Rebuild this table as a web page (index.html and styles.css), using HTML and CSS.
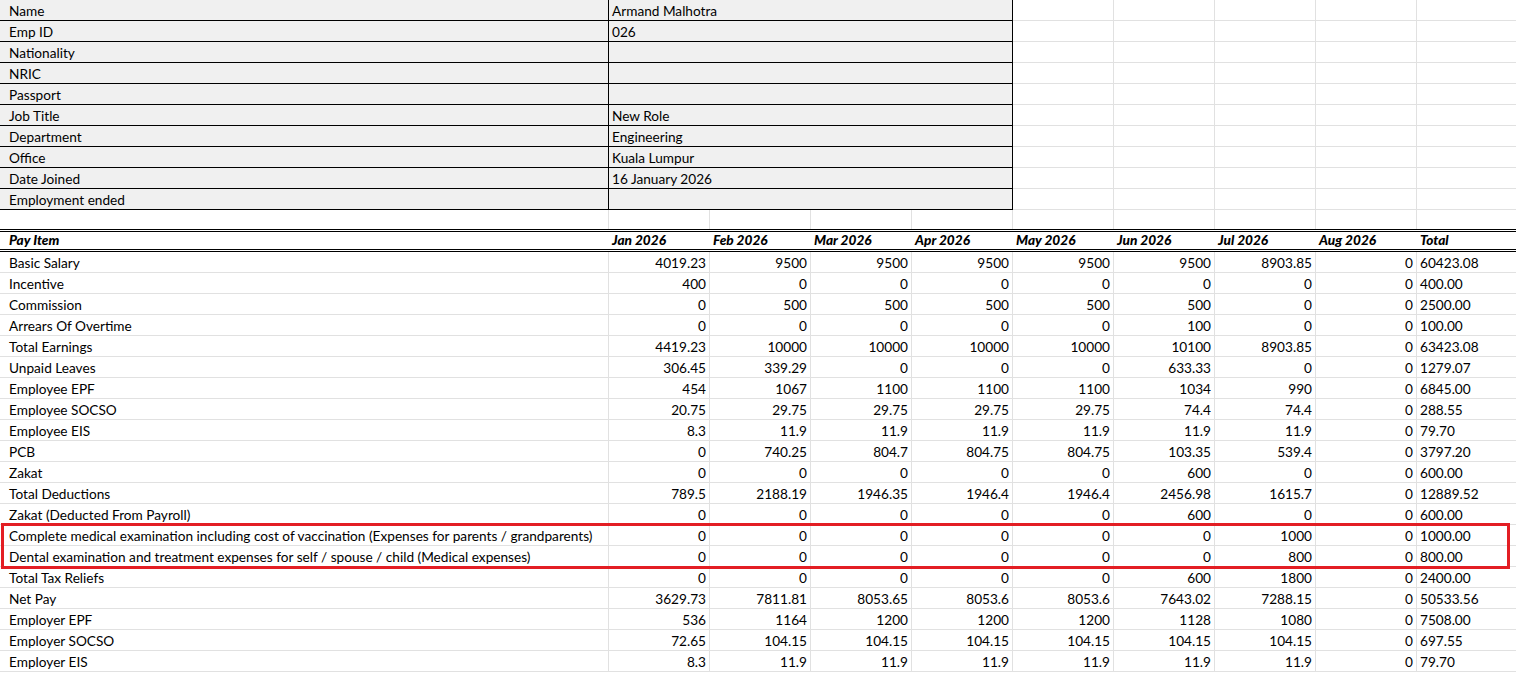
FILE: index.html
```html
<!DOCTYPE html>
<html>
<head>
<meta charset="utf-8">
<link rel="stylesheet" href="styles.css">
</head>
<body>
<div class="sheet">
  <div class="info">
    <div class="row"><div class="c lbl">Name</div><div class="c val">Armand Malhotra</div><div class="c e"></div><div class="c e"></div><div class="c e"></div><div class="c e"></div><div class="c e last"></div></div>
    <div class="row"><div class="c lbl">Emp ID</div><div class="c val">026</div><div class="c e"></div><div class="c e"></div><div class="c e"></div><div class="c e"></div><div class="c e last"></div></div>
    <div class="row"><div class="c lbl">Nationality</div><div class="c val"></div><div class="c e"></div><div class="c e"></div><div class="c e"></div><div class="c e"></div><div class="c e last"></div></div>
    <div class="row"><div class="c lbl">NRIC</div><div class="c val"></div><div class="c e"></div><div class="c e"></div><div class="c e"></div><div class="c e"></div><div class="c e last"></div></div>
    <div class="row"><div class="c lbl">Passport</div><div class="c val"></div><div class="c e"></div><div class="c e"></div><div class="c e"></div><div class="c e"></div><div class="c e last"></div></div>
    <div class="row"><div class="c lbl">Job Title</div><div class="c val">New Role</div><div class="c e"></div><div class="c e"></div><div class="c e"></div><div class="c e"></div><div class="c e last"></div></div>
    <div class="row"><div class="c lbl">Department</div><div class="c val">Engineering</div><div class="c e"></div><div class="c e"></div><div class="c e"></div><div class="c e"></div><div class="c e last"></div></div>
    <div class="row"><div class="c lbl">Office</div><div class="c val">Kuala Lumpur</div><div class="c e"></div><div class="c e"></div><div class="c e"></div><div class="c e"></div><div class="c e last"></div></div>
    <div class="row"><div class="c lbl">Date Joined</div><div class="c val">16 January 2026</div><div class="c e"></div><div class="c e"></div><div class="c e"></div><div class="c e"></div><div class="c e last"></div></div>
    <div class="row"><div class="c lbl">Employment ended</div><div class="c val"></div><div class="c e"></div><div class="c e"></div><div class="c e"></div><div class="c e"></div><div class="c e last"></div></div>
  </div>

  <div class="row spacer"><div class="c item"></div><div class="c m"></div><div class="c m"></div><div class="c m"></div><div class="c m"></div><div class="c m"></div><div class="c m"></div><div class="c m"></div><div class="c m"></div><div class="c tot"></div></div>

  <div class="row head"><div class="c item">Pay Item</div><div class="c m">Jan 2026</div><div class="c m">Feb 2026</div><div class="c m">Mar 2026</div><div class="c m">Apr 2026</div><div class="c m">May 2026</div><div class="c m">Jun 2026</div><div class="c m">Jul 2026</div><div class="c m">Aug 2026</div><div class="c tot">Total</div></div>

  <div class="data">
    <div class="row"><div class="c item">Basic Salary</div><div class="c m">4019.23</div><div class="c m">9500</div><div class="c m">9500</div><div class="c m">9500</div><div class="c m">9500</div><div class="c m">9500</div><div class="c m">8903.85</div><div class="c m">0</div><div class="c tot">60423.08</div></div>
    <div class="row"><div class="c item">Incentive</div><div class="c m">400</div><div class="c m">0</div><div class="c m">0</div><div class="c m">0</div><div class="c m">0</div><div class="c m">0</div><div class="c m">0</div><div class="c m">0</div><div class="c tot">400.00</div></div>
    <div class="row"><div class="c item">Commission</div><div class="c m">0</div><div class="c m">500</div><div class="c m">500</div><div class="c m">500</div><div class="c m">500</div><div class="c m">500</div><div class="c m">0</div><div class="c m">0</div><div class="c tot">2500.00</div></div>
    <div class="row"><div class="c item">Arrears Of Overtime</div><div class="c m">0</div><div class="c m">0</div><div class="c m">0</div><div class="c m">0</div><div class="c m">0</div><div class="c m">100</div><div class="c m">0</div><div class="c m">0</div><div class="c tot">100.00</div></div>
    <div class="row"><div class="c item">Total Earnings</div><div class="c m">4419.23</div><div class="c m">10000</div><div class="c m">10000</div><div class="c m">10000</div><div class="c m">10000</div><div class="c m">10100</div><div class="c m">8903.85</div><div class="c m">0</div><div class="c tot">63423.08</div></div>
    <div class="row"><div class="c item">Unpaid Leaves</div><div class="c m">306.45</div><div class="c m">339.29</div><div class="c m">0</div><div class="c m">0</div><div class="c m">0</div><div class="c m">633.33</div><div class="c m">0</div><div class="c m">0</div><div class="c tot">1279.07</div></div>
    <div class="row"><div class="c item">Employee EPF</div><div class="c m">454</div><div class="c m">1067</div><div class="c m">1100</div><div class="c m">1100</div><div class="c m">1100</div><div class="c m">1034</div><div class="c m">990</div><div class="c m">0</div><div class="c tot">6845.00</div></div>
    <div class="row"><div class="c item">Employee SOCSO</div><div class="c m">20.75</div><div class="c m">29.75</div><div class="c m">29.75</div><div class="c m">29.75</div><div class="c m">29.75</div><div class="c m">74.4</div><div class="c m">74.4</div><div class="c m">0</div><div class="c tot">288.55</div></div>
    <div class="row"><div class="c item">Employee EIS</div><div class="c m">8.3</div><div class="c m">11.9</div><div class="c m">11.9</div><div class="c m">11.9</div><div class="c m">11.9</div><div class="c m">11.9</div><div class="c m">11.9</div><div class="c m">0</div><div class="c tot">79.70</div></div>
    <div class="row"><div class="c item">PCB</div><div class="c m">0</div><div class="c m">740.25</div><div class="c m">804.7</div><div class="c m">804.75</div><div class="c m">804.75</div><div class="c m">103.35</div><div class="c m">539.4</div><div class="c m">0</div><div class="c tot">3797.20</div></div>
    <div class="row"><div class="c item">Zakat</div><div class="c m">0</div><div class="c m">0</div><div class="c m">0</div><div class="c m">0</div><div class="c m">0</div><div class="c m">600</div><div class="c m">0</div><div class="c m">0</div><div class="c tot">600.00</div></div>
    <div class="row"><div class="c item">Total Deductions</div><div class="c m">789.5</div><div class="c m">2188.19</div><div class="c m">1946.35</div><div class="c m">1946.4</div><div class="c m">1946.4</div><div class="c m">2456.98</div><div class="c m">1615.7</div><div class="c m">0</div><div class="c tot">12889.52</div></div>
    <div class="row"><div class="c item">Zakat (Deducted From Payroll)</div><div class="c m">0</div><div class="c m">0</div><div class="c m">0</div><div class="c m">0</div><div class="c m">0</div><div class="c m">600</div><div class="c m">0</div><div class="c m">0</div><div class="c tot">600.00</div></div>
    <div class="highlight">
      <div class="row"><div class="c item">Complete medical examination including cost of vaccination (Expenses for parents / grandparents)</div><div class="c m">0</div><div class="c m">0</div><div class="c m">0</div><div class="c m">0</div><div class="c m">0</div><div class="c m">0</div><div class="c m">1000</div><div class="c m">0</div><div class="c tot">1000.00</div></div>
      <div class="row"><div class="c item">Dental examination and treatment expenses for self / spouse / child (Medical expenses)</div><div class="c m">0</div><div class="c m">0</div><div class="c m">0</div><div class="c m">0</div><div class="c m">0</div><div class="c m">0</div><div class="c m">800</div><div class="c m">0</div><div class="c tot">800.00</div></div>
    </div>
    <div class="row"><div class="c item">Total Tax Reliefs</div><div class="c m">0</div><div class="c m">0</div><div class="c m">0</div><div class="c m">0</div><div class="c m">0</div><div class="c m">600</div><div class="c m">1800</div><div class="c m">0</div><div class="c tot">2400.00</div></div>
    <div class="row"><div class="c item">Net Pay</div><div class="c m">3629.73</div><div class="c m">7811.81</div><div class="c m">8053.65</div><div class="c m">8053.6</div><div class="c m">8053.6</div><div class="c m">7643.02</div><div class="c m">7288.15</div><div class="c m">0</div><div class="c tot">50533.56</div></div>
    <div class="row"><div class="c item">Employer EPF</div><div class="c m">536</div><div class="c m">1164</div><div class="c m">1200</div><div class="c m">1200</div><div class="c m">1200</div><div class="c m">1128</div><div class="c m">1080</div><div class="c m">0</div><div class="c tot">7508.00</div></div>
    <div class="row"><div class="c item">Employer SOCSO</div><div class="c m">72.65</div><div class="c m">104.15</div><div class="c m">104.15</div><div class="c m">104.15</div><div class="c m">104.15</div><div class="c m">104.15</div><div class="c m">104.15</div><div class="c m">0</div><div class="c tot">697.55</div></div>
    <div class="row"><div class="c item">Employer EIS</div><div class="c m">8.3</div><div class="c m">11.9</div><div class="c m">11.9</div><div class="c m">11.9</div><div class="c m">11.9</div><div class="c m">11.9</div><div class="c m">11.9</div><div class="c m">0</div><div class="c tot">79.70</div></div>
  </div>
</div>
</body>
</html>
```

FILE: styles.css
```css
html, body {
  margin: 0;
  padding: 0;
  background: #ffffff;
  overflow: hidden;
}
.sheet {
  width: 1516px;
  font-family: "Lato", "Liberation Sans", sans-serif;
  font-size: 13.65px;
  color: #000;
}
.row {
  display: flex;
  height: 21px;
}
.c {
  box-sizing: border-box;
  height: 21px;
  line-height: 20px;
  padding: 1px 3px 0 3px;
  white-space: nowrap;
  overflow: visible;
  flex: none;
  border-bottom: 1px solid #e1e1e1;
  border-right: 1px solid #e1e1e1;
}
/* info block */
.info .lbl {
  width: 609px;
  padding-left: 9px;
  background: #f0f0f0;
  border-bottom: 1px solid #000;
  border-right: 1px solid #000;
}
.info .val {
  width: 404px;
  background: #f0f0f0;
  border-bottom: 1px solid #000;
  border-right: 1px solid #000;
}
.info .e {
  width: 101px;
}
.info .e.last {
  width: 99px;
  border-right: none;
}
/* pay columns */
.item {
  width: 609px;
  padding-left: 9px;
}
.m {
  width: 101px;
  text-align: right;
}
.tot {
  width: 99px;
  border-right: none;
}
.spacer, .spacer .c {
  height: 19px;
  border-bottom: none;
}
.head {
  height: 23px;
  box-sizing: border-box;
  border-top: 3px double #000;
  border-bottom: 3px double #000;
}
.head .c {
  height: 17px;
  line-height: 17px;
  padding-top: 0;
  border: none;
  font-weight: 900;
  font-style: italic;
  text-align: left;
}
.highlight {
  position: relative;
}
.highlight::after {
  content: "";
  position: absolute;
  left: 1px;
  top: -2px;
  width: 1509px;
  bottom: -2px;
  box-sizing: border-box;
  border: 3px solid #e31e24;
  pointer-events: none;
}
```
